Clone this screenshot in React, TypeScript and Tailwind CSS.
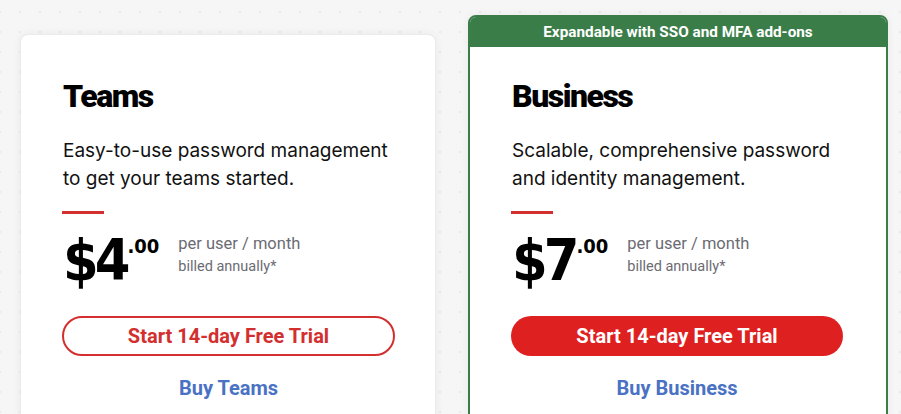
import React from "react";

const head = { fontFamily: 'Roboto, "Liberation Sans", sans-serif' };
const inter = { fontFamily: 'Inter, "Noto Sans", sans-serif' };
const roboto = { fontFamily: 'Roboto, "Liberation Sans", sans-serif' };
const price = { fontFamily: '"DejaVu Sans Condensed", "DejaVu Sans", sans-serif' };

function Plan({
  name,
  desc,
  amount,
  filled,
  buy,
}: {
  name: string;
  desc: string[];
  amount: string;
  filled: boolean;
  buy: string;
}) {
  return (
    <div className="flex flex-col">
      <h2 className="mt-[2px] pl-[1px] text-[32px] leading-[38px] font-black text-black tracking-[-1.5px]" style={head}>
        {name}
      </h2>
      <p className="mt-[22px] pl-[1px] whitespace-nowrap text-[19px] leading-[28px] text-[#111]" style={inter}>
        {desc[0]}
        <br />
        {desc[1]}
      </p>
      <div className="mt-[18px] h-[3px] w-[42px] bg-[#d32f2f]" />
      <div className="mt-[19px] flex items-start pl-[1px]">
        <div className="flex items-start text-black" style={price}>
          <span className="text-[57px] leading-[54px] font-bold tracking-[-4px]">${amount}</span>
          <span className="ml-[1px] mt-[1px] text-[20px] leading-[24px] font-bold">.00</span>
        </div>
        <div className="ml-[19px] flex flex-col text-[#6b6b73]" style={roboto}>
          <span className="text-[16.5px] leading-[22px]">per user / month</span>
          <span className="text-[14.5px] leading-[23px]">billed annually*</span>
        </div>
      </div>
      <div
        className={
          filled
            ? "mt-[29px] flex h-[40px] w-full items-center justify-center rounded-full bg-[#df2020] text-[20px] font-bold text-white"
            : "mt-[29px] flex h-[40px] w-full items-center justify-center rounded-full border-2 border-[#d32f2f] bg-white text-[20px] font-bold text-[#d32f2f]"
        }
        style={head}
      >
        Start 14-day Free Trial
      </div>
      <div className="mt-[19px] text-center text-[20px] leading-[26px] font-bold text-[#4a72c4]" style={head}>
        {buy}
      </div>
    </div>
  );
}

export default function App() {
  return (
    <div className="h-[414px] w-[901px] overflow-hidden bg-[#f6f6f6] bg-[radial-gradient(circle,#ebebeb_1.5px,transparent_1.6px)] bg-[length:20px_20px] bg-[position:10px_22px]">
      <div className="flex items-start gap-[32px] pl-[20px] pt-[15px]">
        <div className="mt-[19px] w-[416px] h-[420px] rounded-[8px] border border-[#ebebeb] bg-white pl-[41px] pr-[40px] pt-[40px] shadow-[0_0_8px_rgba(0,0,0,0.06)]">
          <Plan
            name="Teams"
            desc={["Easy-to-use password management", "to get your teams started."]}
            amount="4"
            filled={false}
            buy="Buy Teams"
          />
        </div>
        <div className="w-[420px] h-[440px] overflow-hidden rounded-[8px] border-2 border-[#3a7d48] bg-white shadow-[0_0_8px_rgba(0,0,0,0.06)]">
          <div
            className="flex h-[30px] items-center justify-center bg-[#3a7d48] text-[15.3px] font-bold text-white"
            style={head}
          >
            Expandable with SSO and MFA add-ons
          </div>
          <div className="pl-[41px] pr-[43px] pt-[28px]">
            <Plan
              name="Business"
              desc={["Scalable, comprehensive password", "and identity management."]}
              amount="7"
              filled={true}
              buy="Buy Business"
            />
          </div>
        </div>
      </div>
    </div>
  );
}
